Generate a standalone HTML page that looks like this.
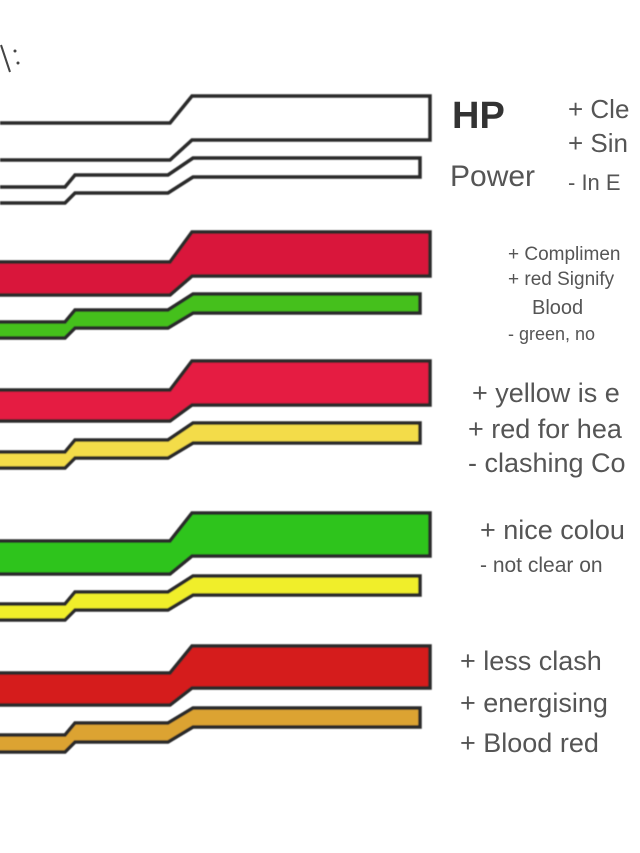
<!DOCTYPE html>
<html><head><meta charset="utf-8"><style>
html,body{margin:0;padding:0;background:#fff;width:640px;height:853px;overflow:hidden}
svg{display:block}
text{font-family:"Liberation Sans",sans-serif;fill:#555}
</style></head><body>
<svg width="640" height="853" viewBox="0 0 640 853">
<defs>
<filter id="r"><feGaussianBlur stdDeviation="0.5"/></filter>
</defs>
<g stroke="#2a2a2a" stroke-width="3.5" stroke-linejoin="miter" filter="url(#r)">
<polyline fill="none" points="0,123 170,123 192,96 430,96 430,140 192,140 170,160 0,160"/>
<polyline fill="none" points="0,187 65,187 75,175 168,175 193,158 420,158 420,177 193,177 168,193 75,193 65,203 0,203"/>
<polygon fill="#d9163a" points="-5,262 170,262 192,232 430,232 430,276 192,276 170,295 -5,295"/>
<polygon fill="#45c01a" points="-5,322 65,322 75,310 168,310 193,294 420,294 420,313 193,313 168,328 75,328 65,338 -5,338"/>
<polygon fill="#e51d43" points="-5,390 170,390 192,361 430,361 430,405 192,405 170,421 -5,421"/>
<polygon fill="#f3dc4a" points="-5,452 65,452 75,440 168,440 193,423 420,423 420,443 193,443 168,458 75,458 65,468 -5,468"/>
<polygon fill="#2fc41a" points="-5,541 170,541 192,513 430,513 430,556 192,556 170,574 -5,574"/>
<polygon fill="#f0ee2c" points="-5,604 65,604 75,592 168,592 193,576 420,576 420,595 193,595 168,610 75,610 65,620 -5,620"/>
<polygon fill="#d51c1c" points="-5,673 170,673 192,646 430,646 430,688 192,688 170,705 -5,705"/>
<polygon fill="#dca332" points="-5,735 65,735 75,723 168,723 193,708 420,708 420,727 193,727 168,742 75,742 65,752 -5,752"/>
</g>
<line x1="1" y1="45" x2="10" y2="72" stroke="#444" stroke-width="2"/>
<circle cx="15" cy="51" r="1.5" fill="#444"/><circle cx="18" cy="63" r="1.5" fill="#444"/>
<text x="452" y="128" font-size="38" font-weight="bold" style="fill:#333">HP</text>
<text x="450" y="186" font-size="30">Power</text>
<text x="568" y="118" font-size="26">+ Cle</text>
<text x="568" y="152" font-size="26">+ Sin</text>
<text x="568" y="190" font-size="22">- In E</text>
<text x="508" y="260" font-size="19">+ Complimen</text>
<text x="508" y="285" font-size="19">+ red Signify</text>
<text x="532" y="314" font-size="20">Blood</text>
<text x="508" y="340" font-size="18">- green, no</text>
<text x="472" y="402" font-size="27">+ yellow is e</text>
<text x="468" y="438" font-size="27">+ red for hea</text>
<text x="468" y="472" font-size="27">- clashing Co</text>
<text x="480" y="539" font-size="27">+ nice colou</text>
<text x="480" y="572" font-size="21">- not clear on</text>
<text x="460" y="670" font-size="27">+ less clash</text>
<text x="460" y="712" font-size="27">+ energising</text>
<text x="460" y="752" font-size="27">+ Blood red</text>
</svg>
</body></html>
